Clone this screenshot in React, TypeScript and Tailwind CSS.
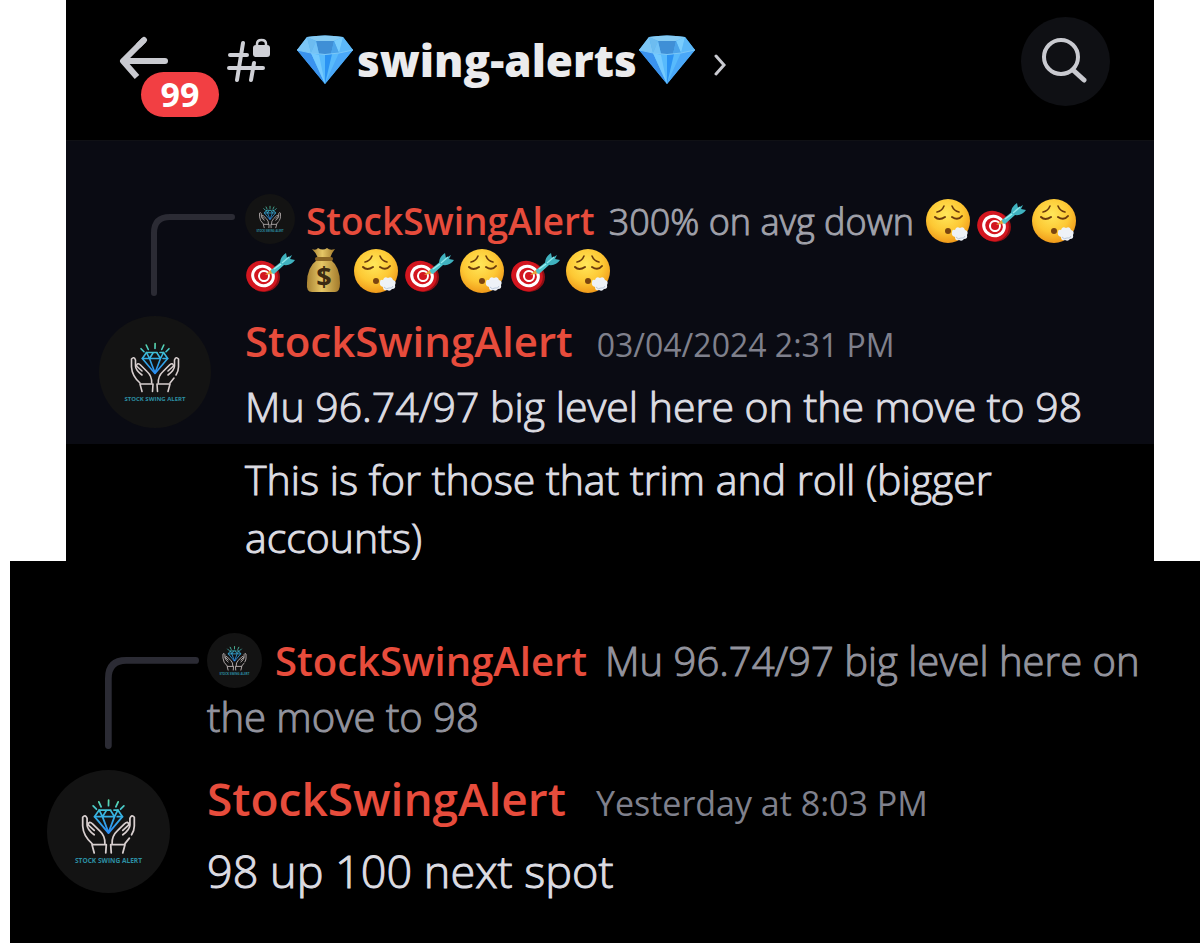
import type { ReactNode } from 'react';
import clsx from 'clsx';

function Gem({ className }: { className?: string }) {
  return (
    <svg viewBox="0 0 56 50" className={className} role="img" aria-label="gem">
      <path d="M10 2 Q28 -1 46 2 L56 15 L28 49 L0 15 Z" fill="#4fb0f7" />
      <path d="M10 2 L0 15 L14 18 Z" fill="#7cc6f6" />
      <path d="M46 2 L56 15 L42 18 Z" fill="#5cb8f8" />
      <path d="M10 2 Q28 -1 46 2 L37 6 H19 Z" fill="#86cbf3" />
      <path d="M10 2 L19 6 L14 18 Z" fill="#6dbcf0" />
      <path d="M46 2 L37 6 L42 18 Z" fill="#79cdfd" />
      <path d="M19 6 H37 L34 19 Q28 20 22 19 Z" fill="#3f8fd6" />
      <path d="M19 6 L22 19 L14 18 Z" fill="#74c3f6" />
      <path d="M37 6 L34 19 L42 18 Z" fill="#4ba4ea" />
      <path d="M0 15 L14 18 L28 49 Z" fill="#3a92ee" />
      <path d="M14 18 Q28 21 42 18 L28 49 Z" fill="#58bafc" />
      <path d="M14 18 L22 20 L28 49 Z" fill="#74caff" />
      <path d="M28 20 L35 19 L28 49 Z" fill="#2b93f3" />
      <path d="M42 18 L56 15 L28 49 Z" fill="#4aa8f8" />
      <path d="M0 15 L14 18 Q28 21 42 18 L56 15" fill="none" stroke="#7cc8f8" strokeWidth="1" />
    </svg>
  );
}

function Exhale() {
  return (
    <svg viewBox="0 0 53 48" className="inline-block w-[53px] h-12 align-[-10px]" role="img" aria-label="exhaling face">
      <defs>
        <radialGradient id="face" cx="0.45" cy="0.35" r="0.65">
          <stop offset="0" stopColor="#ffe75a" />
          <stop offset="0.6" stopColor="#fdc834" />
          <stop offset="1" stopColor="#f09a1a" />
        </radialGradient>
      </defs>
      <circle cx="25" cy="24" r="22" fill="url(#face)" />
      <g fill="none" stroke="#6b3a0c" strokeWidth="1.6" strokeLinecap="round">
        <path d="M14 15 Q19 14 21 9" />
        <path d="M29 9 Q31 14 36 15" />
        <path d="M12 20 Q16 24 22 20" strokeWidth="2" />
        <path d="M29 20 Q35 24 39 19" strokeWidth="2" />
      </g>
      <ellipse cx="25" cy="34" rx="3" ry="3" fill="#7a4410" />
      <path
        d="M29 35 Q29 32 32 33 Q33 29 37 31 Q41 29 42 33 Q46 34 44 38 Q45 42 41 42 Q39 45 36 43 Q32 44 32 40 Q28 39 29 35 Z"
        fill="#eef2f7"
      />
      <path d="M33 40 Q35 43 38 41 Q41 42 42 39" fill="none" stroke="#bcc9dc" strokeWidth="1" />
    </svg>
  );
}

function Dart() {
  return (
    <svg viewBox="0 0 53 48" className="inline-block w-[53px] h-12 align-[-10px]" role="img" aria-label="direct hit">
      <ellipse cx="19" cy="30" rx="16" ry="15" fill="#8f0f14" />
      <ellipse cx="17" cy="29" rx="16" ry="15" transform="rotate(25 17 29)" fill="#d3161f" />
      <ellipse cx="18" cy="29" rx="12" ry="11" transform="rotate(25 18 29)" fill="#fff" />
      <ellipse cx="18" cy="29" rx="9" ry="8" transform="rotate(25 18 29)" fill="#d3161f" />
      <ellipse cx="19" cy="29" rx="6" ry="6" transform="rotate(25 19 29)" fill="#fff" />
      <ellipse cx="19" cy="29" rx="4" ry="4" fill="#d3161f" />
      <path d="M20 28 L27 22 L30 26 Z" fill="#e8a33a" />
      <path d="M26 23 L37 14 Q40 16 39 18 L29 27 Q26 26 26 23 Z" fill="#4cc3cc" />
      <path d="M35 16 Q35 10 41 6 L42 11 L47 8 L45 12 L50 13 Q46 19 39 18 Z" fill="#3fb2bf" />
      <path d="M37 16 L44 10" stroke="#8be6ea" strokeWidth="1.5" />
      <path d="M29 22 L36 17" stroke="#9cecef" strokeWidth="1.5" />
    </svg>
  );
}

function MoneyBag() {
  return (
    <svg viewBox="0 0 53 48" className="inline-block w-[53px] h-12 align-[-10px] [-webkit-text-stroke:0px]" role="img" aria-label="money bag">
      <defs>
        <linearGradient id="bag" x1="0" x2="1" y1="0" y2="0">
          <stop offset="0" stopColor="#a98333" />
          <stop offset="0.45" stopColor="#e6c766" />
          <stop offset="1" stopColor="#a27a2b" />
        </linearGradient>
      </defs>
      <path d="M14 2 Q18 4 20 1 Q25 4 29 1 Q32 4 37 2 Q33 7 32 12 H20 Q19 7 14 2 Z" fill="url(#bag)" />
      <path d="M19 13 H33 Q42 20 42 36 Q42 45 37 45 H14 Q8 45 9 36 Q9 20 19 13 Z" fill="url(#bag)" />
      <rect x="17" y="10" width="18" height="4" rx="2" fill="#8a6524" />
      <text x="26" y="39" textAnchor="middle" fontSize="27" fontWeight="700" fill="#3b2a12">$</text>
    </svg>
  );
}

function Avatar({ className }: { className: string }) {
  return (
    <svg viewBox="0 0 112 112" className={clsx('[-webkit-text-stroke:0px]', className)} role="img" aria-label="Stock Swing Alert">
      <defs>
        <linearGradient id="gem" x1="0" x2="0" y1="27" y2="58" gradientUnits="userSpaceOnUse">
          <stop offset="0" stopColor="#5fe0a8" />
          <stop offset="0.4" stopColor="#38b6e0" />
          <stop offset="1" stopColor="#2a8cf5" />
        </linearGradient>
      </defs>
      <circle cx="56" cy="56" r="56" fill="#131313" />
      <g fill="none" strokeWidth="1.6" strokeLinecap="round" strokeLinejoin="round">
        <g stroke="url(#gem)">
          <path d="M56.1 27.5 L56 32.5 M47.2 29 L49.3 33.5 M64.8 29 L62.7 33.5 M42 32.7 L45 35.7 M70 32.7 L67 35.7" />
          <path d="M58 36.5 H47.5 L43.3 42.5 L56 57.5 L68.7 42.5 L64.5 36.5 H61" />
          <path d="M43.3 42.5 H60 M64 42.5 H68.7 M50.5 42.5 L56 57 L61.5 42.5 L58 37 M47.5 36.5 L50.5 42.5 L54 37 M61.5 42.5 L64.5 36.5" />
        </g>
        <g stroke="#d8cfcf">
          <path d="M43 59 Q36.500 54 36.500 50 V44 Q35 40 32.500 43 V51 Q33 60 41 67" />
          <path d="M43 55 L37.500 50 Q38 46 41.500 49 L48 55.500 Q53 60 52.700 67" />
          <path d="M43 75.500 L41 68 H54 L53.500 75.500" />
          <path d="M69 59 Q75.500 54 75.500 50 V44 Q77 40 79.500 43 V51 Q79.500 55 77 59 M75 62 L71 67" />
          <path d="M69 55 L74.500 50 Q74 46 70.500 49 L64 55.500 Q59 60 59.300 67" />
          <path d="M69 75.500 L71 68 H58 L58.500 75.500" />
        </g>
      </g>
      <text x="56" y="85" textAnchor="middle" fontSize="6" fontWeight="700" fill="#2c8fa3">
        STOCK SWING ALERT
      </text>
    </svg>
  );
}

// curved line that joins a reply preview to the author's avatar
function ReplyLine({ className }: { className: string }) {
  return (
    <svg viewBox="0 0 84 82" className={className} aria-hidden="true">
      <path d="M3 79 V19 Q3 3 19 3 H81" fill="none" stroke="#2b2b34" strokeWidth="6" strokeLinecap="round" />
    </svg>
  );
}

function Author({ className }: { className: string }) {
  return (
    <a href="#author" className={clsx('font-semibold text-[#e74c3c] [-webkit-text-stroke:0px]', className)}>
      StockSwingAlert
    </a>
  );
}

function Header() {
  return (
    <header className="flex items-start h-[141px] border-b border-[#101115] bg-black pl-[53px] pr-11">
      <button type="button" aria-label="Back, 99 unread" className="relative mt-9 w-[50px] shrink-0">
        <svg viewBox="0 0 50 44" className="block w-[50px] h-11" fill="none" stroke="#c9cad0" strokeWidth="6" strokeLinejoin="round">
          <path d="M25 4 L4 25 L18 41" />
          <path d="M5 25 H46" strokeLinecap="round" />
          <path d="M25 4 L20 9" strokeLinecap="round" />
        </svg>
        <span className="absolute left-[22px] top-9 flex h-[45px] w-[78px] items-center justify-center rounded-full bg-[#f23f43] text-[34px] font-bold text-white">
          99
        </span>
      </button>
      <svg viewBox="0 0 44 46" className="ml-[57px] mt-[38px] h-[46px] w-11 shrink-0" aria-hidden="true">
        <g fill="none" stroke="#cfd0d6" strokeWidth="4" strokeLinecap="round">
          <path d="M17 5 L11 42 M4 17 H21 M3 30 H37 M28 25 L25 42" />
        </g>
        <rect x="27" y="7" width="17" height="12" rx="3" fill="#cfd0d6" />
        <path d="M31 9 V6 Q31 2 35.500 2 Q40 2 40 6 V9" fill="none" stroke="#cfd0d6" strokeWidth="2.500" />
      </svg>
      <h1 className="ml-[27px] mt-[30px] flex h-[60px] items-center whitespace-nowrap text-[44px] font-extrabold text-[#ebebed]">
        <Gem className="h-[50px] w-14" />
        <span className="ml-1 mr-[2px]">swing-alerts</span>
        <Gem className="h-[50px] w-14" />
      </h1>
      <svg viewBox="0 0 12 22" className="ml-[19px] mt-[54px] h-[22px] w-3 shrink-0" fill="none" stroke="#c9cad0" strokeWidth="3" strokeLinecap="round" aria-hidden="true">
        <path d="M2 2 L10 11 L2 20" />
      </svg>
      <button type="button" aria-label="Search" className="ml-auto mt-[17px] flex h-[89px] w-[89px] shrink-0 items-center justify-center rounded-full bg-[#0f1014] pb-1 pr-1">
        <svg viewBox="0 0 46 46" className="h-[46px] w-[46px]" fill="none" stroke="#c9cad0" strokeWidth="4" strokeLinecap="round">
          <circle cx="20" cy="20" r="17" />
          <path d="M32 33 L43 43" strokeWidth="5" />
        </svg>
      </button>
    </header>
  );
}

function Body({ children, className }: { children: ReactNode; className: string }) {
  return <p className={clsx('font-light [-webkit-text-stroke:1px]', className)}>{children}</p>;
}

export default function App() {
  return (
    <main className="flex min-h-screen flex-col bg-white font-['Open_Sans',sans-serif]">
      <section className="ml-[66px] mr-[46px] bg-black">
        <Header />

        <article className="grid grid-cols-[179px_1fr] bg-[#0a0b13] pb-2 pr-10 pt-[55px]">
          <ReplyLine className="ml-[85px] mt-[18px] h-[82px] w-[84px]" />
          <Body className="text-[36px] leading-[50px] text-[#a0a1aa]">
            <Avatar className="-my-2 mr-[11px] inline-block h-[50px] w-[50px] align-[-1px]" />
            <Author className="mr-[14px] text-[37px]" />
            300% on avg down{' '}
            <Exhale /><Dart /><Exhale /><Dart /><MoneyBag /><Exhale /><Dart /><Exhale /><Dart /><Exhale />
          </Body>
          <Avatar className="ml-[33px] mt-[19px] h-28 w-28" />
          <div className="pt-[14px]">
            <div className="flex items-baseline leading-[60px]">
              <Author className="text-[42px]" />
              <time className="ml-6 text-[32px] text-[#7f808c]">03/04/2024 2:31 PM</time>
            </div>
            <Body className="mt-px text-[41px] leading-[60px] text-[#dcdce2]">
              Mu 96.74/97 big level here on the move to 98
            </Body>
          </div>
        </article>

        <Body className="pl-[179px] pr-10 pt-[6px] text-[41px] leading-[58px] text-[#dcdce2]">
          This is for those that trim and roll (bigger accounts)
        </Body>
      </section>

      <section className="relative -mt-[5px] ml-[10px] flex-1 bg-black">
        <article className="grid grid-cols-[197px_1fr] pr-10 pt-[72px]">
          <ReplyLine className="ml-[95px] mt-6 h-[92px] w-[94px]" />
          <Body className="text-[40px] leading-[56px] text-[#92939d]">
            <Avatar className="-my-2 mr-[13px] inline-block h-[55px] w-[55px] align-[-4px]" />
            <Author className="mr-[18px]" />
            Mu 96.74/97 big level here on the move to 98
          </Body>
          <Avatar className="ml-[37px] mt-[21px] h-[123px] w-[123px]" />
          <div className="pt-[19px]">
            <div className="flex items-baseline leading-[60px]">
              <Author className="text-[46px]" />
              <time className="ml-[30px] text-[34px] text-[#7f808c]">Yesterday at 8:03 PM</time>
            </div>
            <Body className="mt-2 text-[45px] leading-[60px] text-[#dcdce2]">98 up 100 next spot</Body>
          </div>
        </article>
      </section>
    </main>
  );
}
